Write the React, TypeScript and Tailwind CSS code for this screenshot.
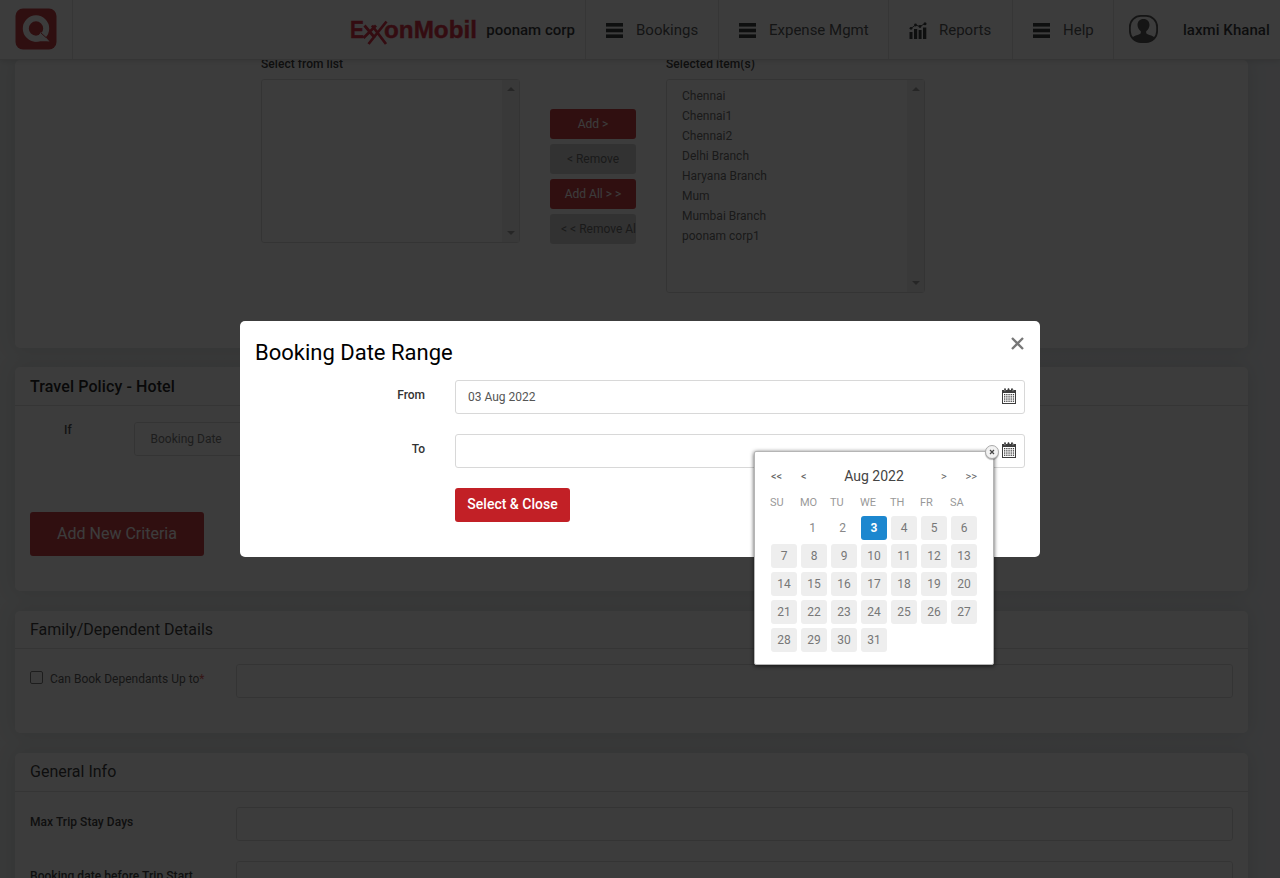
import React from "react";

const BarsIcon = () => (
  <svg width="17" height="15" viewBox="0 0 17 15" fill="#1c1f20" className="-mt-[1px] shrink-0">
    <rect y="0" width="17" height="3.6" />
    <rect y="5.700" width="17" height="3.6" />
    <rect y="11.400" width="17" height="3.6" />
  </svg>
);

const ChartIcon = () => (
  <svg width="18" height="17" viewBox="0 0 18 17" fill="#1c1f20" className="shrink-0">
    <rect x="0.5" y="10" width="3" height="7" />
    <rect x="5" y="7" width="3.2" height="10" />
    <rect x="9.6" y="8" width="3" height="9" />
    <rect x="14" y="5.5" width="3.3" height="11.5" />
    <path d="M2 6.5 6.5 3 11 4.5 16 1.5" stroke="#1c1f20" strokeWidth="0.9" fill="none" />
    <circle cx="2" cy="6.3" r="1.4" />
    <circle cx="6.5" cy="3" r="1.4" />
    <circle cx="11" cy="4.5" r="1.4" />
    <circle cx="16" cy="1.7" r="1.5" />
  </svg>
);

const UserIcon = () => (
  <svg width="29" height="28" viewBox="0 0 29 28" className="-mt-[1px] shrink-0">
    <rect x="0.9" y="0.9" width="27.2" height="26.2" rx="11" fill="none" stroke="#3c3c3c" strokeWidth="1.8" />
    <path
      d="M14.5 4c3.800 0 6 2.600 6 6 0 2.500-1.400 4.800-3.300 6.300v1.500c0 1 1.300 1.500 3.300 2.100 2.500.8 4.500 1.600 5.300 3.100C23.500 25.800 20.500 27 17.500 27h-6c-3 0-6-1.200-8.300-4 .8-1.500 2.800-2.300 5.300-3.100 2-.6 3.300-1.100 3.300-2.100v-1.500C9.900 14.800 8.500 12.500 8.500 10c0-3.400 2.200-6 6-6z"
      fill="#3c3c3c"
    />
  </svg>
);

const CalendarIcon = () => (
  <svg width="14" height="16" viewBox="0 0 14 16" className="shrink-0">
    <path d="M0 2h2V1l1-1 1 1v1h1.500V1l1-1 1 1v1H9V1l1-1 1 1v1h3v14H0z" fill="#3d3d3d" />
    <rect x="1" y="5" width="12" height="10" fill="#fff" />
    {[6, 8.2, 10.4, 12.6].map((y) =>
      [2, 4.2, 6.4, 8.6, 10.8].map((x) => (
        <rect key={`${x}-${y}`} x={x} y={y} width="1.300" height="1.300" fill="#3d3d3d" />
      ))
    )}
    <path d="M2.200 1.500h1.300v1.700H2.200zM10.300 1.500h1.300v1.700h-1.300z" fill="#888" />
  </svg>
);

const QLogo = () => (
  <svg width="42" height="42" viewBox="0 0 42 42">
    <rect x="0.5" y="0.5" width="41" height="41" rx="7.5" fill="#bf1f25" />
    <circle cx="21" cy="20.500" r="10.2" fill="none" stroke="#fff" strokeWidth="6" />
    <path d="M19 33.500l5-6.500 2-3 8.500 9.500c-4.500-.4-9-.3-15.500 0z" fill="#fff" />
    <path d="M26 25l5 4.500" stroke="#bf1f25" strokeWidth="1" />
  </svg>
);

const CompanyLogo = () => (
  <svg width="128" height="28" viewBox="0 0 128 28" fontFamily="Liberation Sans" fontWeight="700" fill="#d5102a" stroke="#d5102a" overflow="visible">
    <text x="0" y="20" fontSize="24" strokeWidth="0.400" textLength="14" lengthAdjust="spacingAndGlyphs">E</text>
    <path d="M14.500 7.500 25 20M26 7.500 13.500 20M22 7.500 36 26M36.500 3.500 18.500 26" strokeWidth="2.800" fill="none" />
    <text x="34" y="20" fontSize="23" strokeWidth="0.400" textLength="93" lengthAdjust="spacingAndGlyphs">onMobil</text>
  </svg>
);

function NavItem({ width, icon, gap, label }: { width: string; icon: React.ReactNode; gap: string; label: string }) {
  return (
    <div className={`flex h-full shrink-0 items-center border-l border-[#e2e2e2] pt-[2px] pl-5 text-[15px] font-normal text-[#3a3c3e] ${width} ${gap}`}>
      {icon}
      <span className="whitespace-nowrap">{label}</span>
    </div>
  );
}

function Header() {
  return (
    <header className="relative z-10 flex h-[60px] shrink-0 items-stretch border-b border-[#dddddd] bg-white shadow-[0_1px_6px_rgba(0,0,0,0.15)]">
      <div className="flex w-[73px] items-start border-r border-[#e2e2e2] pt-2 pl-[15px]">
        <QLogo />
      </div>
      <div className="flex flex-1 items-center justify-end gap-2 pt-[2px] pr-[10px]">
        <div className="pt-[2px]">
          <CompanyLogo />
        </div>
        <span className="text-[15px] font-medium whitespace-nowrap text-[#16181a]">poonam corp</span>
      </div>
      <NavItem width="w-[133px]" gap="gap-[13px]" icon={<BarsIcon />} label="Bookings" />
      <NavItem width="w-[170px]" gap="gap-[13px]" icon={<BarsIcon />} label="Expense Mgmt" />
      <NavItem width="w-[124px]" gap="gap-3" icon={<ChartIcon />} label="Reports" />
      <NavItem width="w-[101px]" gap="gap-[13px]" icon={<BarsIcon />} label="Help" />
      <div className="flex w-[167px] shrink-0 items-center border-l border-[#e2e2e2] pl-[15px]">
        <UserIcon />
        <span className="mt-[2px] ml-[25px] text-[15px] font-medium tracking-[0.05px] whitespace-nowrap text-[#16181a]">laxmi Khanal</span>
      </div>
    </header>
  );
}

function ListBox({ title, items, height }: { title: string; items: string[]; height: string }) {
  return (
    <div className="w-[259px]">
      <div className="h-[23px] text-[12px] leading-[16px] font-medium tracking-[0.05px] text-[#222]">{title}</div>
      <div className={`flex rounded-[3px] border border-[#d8d8d8] ${height}`}>
        <div className="flex-1 py-[6px] pl-[15px]">
          {items.map((item) => (
            <div key={item} className="h-5 text-[12px] leading-5 text-[#555]">
              {item}
            </div>
          ))}
        </div>
        <div className="flex w-[17px] flex-col items-center justify-between bg-[#f1f1f1] py-[7px]">
          <svg width="8" height="5" viewBox="0 0 8 5" fill="#909090"><path d="M4 0l4 4H0z" /></svg>
          <svg width="8" height="5" viewBox="0 0 8 5" fill="#909090"><path d="M4 5L0 1h8z" /></svg>
        </div>
      </div>
    </div>
  );
}

const cardClass = "w-[1233px] shrink-0 rounded-[5px] bg-white shadow-[0_0_20px_rgba(0,0,0,0.13)]";

function SettingsPage() {
  return (
    <main className="flex h-[818px] flex-col overflow-hidden pl-[15px]">
      <section className={`h-[288px] ${cardClass}`}>
        <div className="-mt-1 flex pl-[246px]">
          <ListBox title="Select from list" items={[]} height="h-[164px]" />
          <div className="mx-[30px] mt-[53px] flex w-[86px] flex-col gap-[5px] text-center text-[12px] leading-[30px]">
            <div className="h-[30px] rounded-[3px] bg-[#c22026] text-white">Add &gt;</div>
            <div className="h-[30px] rounded-[3px] bg-[#cccccc] text-[#555]">&lt; Remove</div>
            <div className="h-[30px] rounded-[3px] bg-[#c22026] text-white">Add All &gt; &gt;</div>
            <div className="h-[30px] overflow-hidden rounded-[3px] bg-[#cccccc] pl-[11px] text-left whitespace-nowrap text-[#555]">&lt; &lt; Remove All</div>
          </div>
          <ListBox
            title="Selected item(s)"
            items={["Chennai", "Chennai1", "Chennai2", "Delhi Branch", "Haryana Branch", "Mum", "Mumbai Branch", "poonam corp1"]}
            height="h-[214px]"
          />
        </div>
      </section>

      <section className={`mt-[19px] h-[224px] ${cardClass}`}>
        <h2 className="h-[39px] border-b border-[#dddddd] pl-[15px] text-[16px] leading-[40px] font-medium tracking-[0.1px] text-black">Travel Policy - Hotel</h2>
        <div className="mt-4 flex">
          <label className="w-[119px] pl-[49px] text-[12px] leading-4 font-medium text-[#333]">If</label>
          <div className="h-[34px] w-[220px] rounded-[3px] border border-[#d8d8d8] pl-[15.5px] text-[12px] leading-[32px] text-[#666]">Booking Date</div>
        </div>
        <div className="mt-14 ml-[15px] h-11 w-[174px] rounded-[3px] bg-[#c22026] text-center text-[16px] leading-[43px] text-white">Add New Criteria</div>
      </section>

      <section className={`mt-5 h-[122px] ${cardClass}`}>
        <h2 className="h-[38px] border-b border-[#dddddd] pl-[15px] text-[16px] leading-[37px] text-[#1a1a1a]">Family/Dependent Details</h2>
        <div className="mt-[15px] flex pl-[15px]">
          <div className="flex w-[206px] pt-[7px]">
            <span className="h-[13px] w-[13px] rounded-[2px] border border-[#666]" />
            <span className="ml-[7px] text-[12px] leading-4 text-[#444]">
              Can Book Dependants Up to<span className="text-[#e04040]">*</span>
            </span>
          </div>
          <div className="h-[34px] w-[997px] rounded-[3px] border border-[#d8d8d8]" />
        </div>
      </section>

      <section className={`mt-5 h-[200px] ${cardClass}`}>
        <h2 className="h-[39px] border-b border-[#dddddd] pl-[15px] text-[16px] leading-[37px] text-[#1a1a1a]">General Info</h2>
        <div className="mt-[15px] flex flex-col gap-5 pl-[15px]">
          {["Max Trip Stay Days", "Booking date before Trip Start"].map((label) => (
            <div key={label} className="flex">
              <label className="w-[206px] pt-[7px] text-[12px] leading-4 font-medium tracking-[0.05px] text-[#222]">{label}</label>
              <div className="h-[34px] w-[997px] rounded-[3px] border border-[#d8d8d8]" />
            </div>
          ))}
        </div>
      </section>
    </main>
  );
}

function DayCell({ day }: { day: number | null }) {
  if (day === null) return <span />;
  if (day < 3) return <span className="pr-[3px] text-[#888]">{day}</span>;
  if (day === 3) return <span className="rounded-[3px] bg-[#1c87cf] font-bold text-white">{day}</span>;
  return <span className="rounded-[3px] bg-[#eeeeee] text-[#777]">{day}</span>;
}

function DatePicker() {
  const days: (number | null)[] = [null, ...Array.from({ length: 31 }, (_, i) => i + 1)];
  return (
    <div className="absolute top-[130px] left-[514px] h-[214px] w-[240px] rounded-[2px] border border-[#b5b5b5] bg-white px-4 pt-[15px] shadow-[0_1px_4px_rgba(0,0,0,0.7)]">
      <div className="absolute -top-[7px] -right-[6px] flex h-[14px] w-[14px] items-center justify-center rounded-full border border-[#aaa] bg-[#f2f2f2] shadow-[0_1px_1px_rgba(0,0,0,0.3)]">
        <svg width="6" height="6" viewBox="0 0 6 6" stroke="#444" strokeWidth="1.200"><path d="M1 1l4 4M5 1L1 5" /></svg>
      </div>
      <div className="flex h-[18px] items-center text-[11px] text-[#666]">
        <span className="w-[30px] pt-[2px]">&lt;&lt;</span>
        <span className="w-[20px] pt-[2px]">&lt;</span>
        <span className="flex-1 pr-[14px] text-center text-[14px] text-[#444]">Aug 2022</span>
        <span className="w-[24px] pt-[2px]">&gt;</span>
        <span className="flex w-[12px] justify-end pt-[2px]">&gt;&gt;</span>
      </div>
      <div className="-ml-px mt-[10px] grid h-4 grid-cols-[repeat(7,30px)] text-[11px] leading-4 text-[#999]">
        {["SU", "MO", "TU", "WE", "TH", "FR", "SA"].map((d) => (
          <span key={d}>{d}</span>
        ))}
      </div>
      <div className="mt-[5px] grid grid-cols-[repeat(7,26px)] auto-rows-[24px] gap-1 text-center text-[12px] leading-6">
        {days.map((day, i) => (
          <DayCell key={i} day={day} />
        ))}
      </div>
    </div>
  );
}

function DateField({ label, value }: { label: string; value: string }) {
  return (
    <div className="flex">
      <label className="w-[170px] pt-[7px] text-right text-[12px] leading-4 font-medium text-[#333]">{label}</label>
      <div className="ml-[30px] flex h-[34px] w-[570px] justify-between rounded-[3px] border border-[#d8d8d8] pt-[7px] pr-2 pl-3 text-[12px] leading-[18px] text-[#555]">
        <span>{value}</span>
        <CalendarIcon />
      </div>
    </div>
  );
}

function DateRangeDialog() {
  return (
    <div className="relative h-[236px] w-[800px] rounded-[5px] bg-white pt-4 pl-[15px]">
      <div className="flex items-start justify-between pr-4">
        <h1 className="text-[22px] leading-8 text-black">Booking Date Range</h1>
        <svg width="13" height="13" viewBox="0 0 13 13" stroke="#777" strokeWidth="2.300" fill="none">
          <path d="M1 1l11 11M12 1L1 12" />
        </svg>
      </div>
      <div className="mt-[11px] flex w-[785px] flex-col gap-5">
        <DateField label="From" value="03 Aug 2022" />
        <DateField label="To" value="" />
      </div>
      <button className="mt-5 ml-[200px] block h-[34px] w-[115px] rounded-[3px] bg-[#c22026] pb-px text-[14px] leading-[31px] font-medium text-white">Select &amp; Close</button>
      <DatePicker />
    </div>
  );
}

export default function App() {
  return (
    <div className="relative h-[878px] w-[1280px] overflow-hidden bg-linear-to-r from-[#eef2f2] via-[#eff2f2] to-[#edf1f5] font-['Roboto',sans-serif]">
      <Header />
      <SettingsPage />
      <div className="absolute inset-0 z-20 bg-[#0b0b0b]/80" />
      <div className="absolute inset-0 z-30 flex items-center justify-center">
        <DateRangeDialog />
      </div>
    </div>
  );
}
